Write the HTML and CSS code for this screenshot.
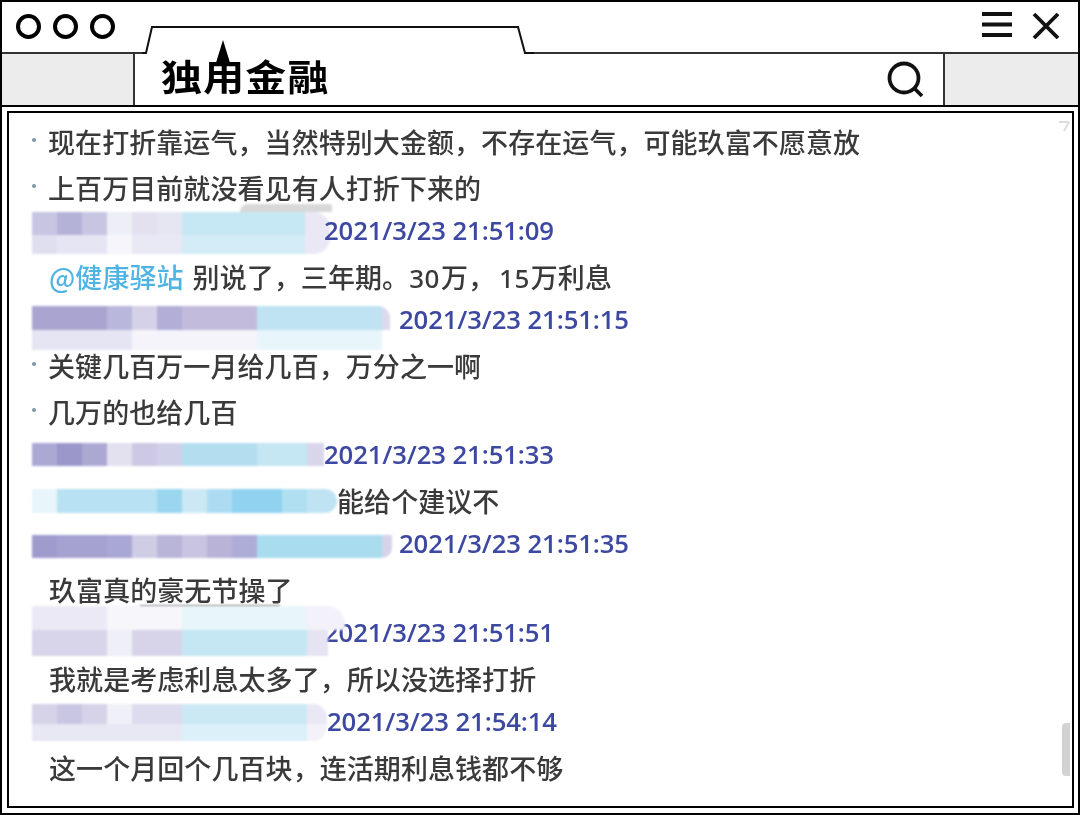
FILE: index.html
```html
<!DOCTYPE html>
<html lang="zh">
<head>
<meta charset="utf-8">
<title>独角金融</title>
<link rel="stylesheet" href="styles.css">
</head>
<body>
<div class="window">
  <svg class="tab" width="392" height="30" viewBox="0 0 392 30"><path d="M0 28 H4 L10 2 H376 L383 28 H392 V30 H0 Z" fill="#fff" stroke="none"/><path d="M0 28 H4 L10 2 H376 L383 28 H392" fill="none" stroke="#111" stroke-width="2"/></svg>
  <header class="titlebar">
    <div class="lights"><span class="light"></span><span class="light"></span><span class="light"></span></div>
    <div class="controls">
      <svg class="icon" width="32" height="28" viewBox="0 0 32 28"><path d="M1 3H31M1 13.500H31M1 24H31" stroke="#111" stroke-width="4" fill="none"/></svg>
      <svg class="icon" width="28" height="28" viewBox="0 0 28 28"><path d="M2 3L26 27M26 3L2 27" stroke="#111" stroke-width="3.800" fill="none"/></svg>
    </div>
  </header>
  <div class="addressbar">
    <div class="side side-left"></div>
    <div class="address">
      <svg class="horn" width="18" height="26" viewBox="0 0 18 26"><path d="M9 0L17 26H1Z" fill="#000"/></svg>
      <span class="brand">独用金融</span>
      <svg class="search" width="38" height="38" viewBox="0 0 38 38"><circle cx="17" cy="17" r="14.500" fill="none" stroke="#111" stroke-width="3.800"/><path d="M27 27L35 35" stroke="#111" stroke-width="3.800" fill="none"/></svg>
    </div>
    <div class="side side-right"></div>
  </div>
  <main class="frame">
    <svg class="resize" width="12" height="12" viewBox="0 0 12 12"><path d="M1 2H11M11 2L6 11" stroke="#ddd" stroke-width="2" fill="none"/></svg>
    <div class="scrollbar"></div>
    <p class="msg dot">现在打折靠运气，当然特别大金额，不存在运气，可能玖富不愿意放</p>
    <p class="msg dot">上百万目前就没看见有人打折下来的</p>
    <div class="meta"><span class="blob b1"></span><time class="stamp">2021/3/23 21:51:09</time></div>
    <p class="msg"><span class="mention">@健康驿站</span>别说了，三年期。<span class="num">30</span>万，<span class="num num-next">15</span>万利息</p>
    <div class="meta"><span class="blob b2"></span><time class="stamp">2021/3/23 21:51:15</time></div>
    <p class="msg dot">关键几百万一月给几百，万分之一啊</p>
    <p class="msg dot">几万的也给几百</p>
    <div class="meta"><span class="blob b3"></span><time class="stamp">2021/3/23 21:51:33</time></div>
    <p class="msg msg-blob"><span class="blob b4"></span><span>能给个建议不</span></p>
    <div class="meta"><span class="blob b5"></span><time class="stamp">2021/3/23 21:51:35</time></div>
    <p class="msg">玖富真的<span class="smudge">豪无节操</span>了</p>
    <div class="meta"><span class="blob b6"></span><time class="stamp">2021/3/23 21:51:51</time></div>
    <p class="msg">我就是考虑利息太多了，所以没选择打折</p>
    <div class="meta"><span class="blob b7"></span><time class="stamp">2021/3/23 21:54:14</time></div>
    <p class="msg">这一个月回个几百块，连活期利息钱都不够</p>
  </main>
</div>
</body>
</html>
```
FILE: styles.css
```css
* { box-sizing: border-box; }
html, body { margin: 0; padding: 0; background: #fff; }
body { width: 1080px; height: 815px; overflow: hidden; font-family: "Noto Sans CJK SC", "Noto Sans", sans-serif; }

.window { position: relative; width: 1080px; height: 815px; border: 2px solid #000; display: flex; flex-direction: column; background: #fff; }
.tab { position: absolute; left: 140px; top: 23px; z-index: 2; }

.titlebar { height: 50px; display: flex; justify-content: space-between; align-items: flex-start; padding: 9px 18px 0 14px; }
.lights { display: flex; gap: 12px; margin-top: 3px; }
.light { width: 25px; height: 25px; border: 4px solid #000; border-radius: 50%; }
.controls { display: flex; gap: 19px; }
.icon { display: block; }

.addressbar { height: 55px; display: flex; border-top: 2px solid #333; border-bottom: 2px solid #000; }
.side { background: #ececec; }
.side-left { width: 133px; border-right: 2px solid #333; }
.side-right { width: 135px; border-left: 2px solid #333; }
.address { position: relative; flex: 1; display: flex; align-items: center; justify-content: space-between; padding: 0 18px 0 26px; background: #fff; }
.brand { position: relative; z-index: 3; margin-bottom: 10px; font-size: 36px; line-height: 44px; font-weight: 700; letter-spacing: 1px; color: #000; transform: scaleX(1.14); transform-origin: left center; }
.horn { position: absolute; left: 79px; top: -14px; z-index: 3; }
.search { display: block; }

.frame { position: relative; margin: 4px 4px 5px 5px; flex: 1; border: 2px solid #000; padding: 5.500px 0 0; min-height: 0; background: #fff; }
.resize { position: absolute; right: 2px; top: 7px; }
.scrollbar { position: absolute; right: 2px; top: 610px; width: 8px; height: 53px; background: #d2d2d2; border-radius: 4px 0 0 4px; filter: blur(0.6px); }

.msg { margin: 0; height: 46px; padding-left: 40px; font-size: 27px; font-weight: 500; letter-spacing: 0.07px; line-height: 46px; color: #3a3a3a; white-space: nowrap; filter: blur(0.6px); }
.dot::before { content: ""; display: inline-block; width: 4px; height: 4px; margin: 0 12px 10px -17px; background: #7d98a3; border-radius: 50%; vertical-align: middle; }
.mention { margin-right: 9px; color: #4fb4e4; }
.num { font-family: "Noto Sans", sans-serif; font-size: 26px; font-weight: 500; letter-spacing: 0.5px; margin-right: 1px; }
.num-next { margin-left: 4px; }
.smudge { position: relative; }
.smudge::after { content: ""; position: absolute; left: -17px; bottom: 1px; width: 140px; height: 3px; background: #9a9a9a; filter: blur(0.8px); }

.msg-blob { display: flex; padding-left: 23px; }
.meta { height: 40px; margin-bottom: 3px; padding-left: 23px; display: flex; align-items: flex-start; }
.stamp { font-family: "Open Sans", "Noto Sans", sans-serif; font-size: 25.700px; font-weight: 600; letter-spacing: -0.1px; line-height: 40px; color: #3c48a2; white-space: nowrap; filter: blur(0.5px); }

.blob { display: block; flex: none; position: relative; filter: blur(1px); background-repeat: no-repeat; }
.b1 { width: 298px; height: 42px; margin: 1px -6px 0 0; border-radius: 0 16px 16px 0;
  background-image:
    linear-gradient(90deg, #c8c5e2 0 25px, #b5b2d8 25px 50px, #c8c5e2 50px 75px, #eeeef7 75px 100px, #e3e1f0 100px 125px, #e6e6f3 125px 150px, #c6e7f4 150px 273px, #ebe8f5 273px),
    linear-gradient(90deg, #e0dff0 0 25px, #e6e5f3 25px 75px, #f5f5fb 75px 100px, #e9e8f5 100px 150px, #d3ecf7 150px 273px, #ebe8f5 273px);
  background-size: 100% 23px, 100% 19px; background-position: top, bottom; }
.b1::before { content: ""; position: absolute; left: 208px; top: -8px; width: 92px; height: 8px; background: #d8d8d8; border-radius: 30px 6px 0 0; }
.b2 { width: 358px; height: 44px; margin: 6px 9px 0 0; border-radius: 0 12px 0 0;
  background-image:
    linear-gradient(90deg, #a9a5d0 0 75px, #b9b8dc 75px 100px, #d5d2e8 100px 125px, #b2aed8 125px 150px, #c2bbdc 150px 225px, #bfe3f2 225px 350px, #dcd9ee 350px),
    linear-gradient(90deg, #e5e5f3 0 100px, #f4f4fa 100px 225px, #e8f5fb 225px 350px, #fff 350px);
  background-size: 100% 24px, 100% 20px; background-position: top, bottom; }
.b3 { width: 292px; height: 23px; margin: 8px 0 0 0;
  background-image: linear-gradient(90deg, #aba8d4 0 25px, #9b97cb 25px 50px, #aba9d2 50px 75px, #e3e1f0 75px 100px, #cdc8e4 100px 125px, #d0d0e8 125px 150px, #b2def0 150px 225px, #c5e6f3 225px 275px, #d9d6ec 275px); }
.b4 { width: 305px; height: 24px; margin: 11px 0 0 0; border-radius: 0 12px 12px 0;
  background-image: linear-gradient(90deg, #e8f5fb 0 25px, #b8e2f3 25px 125px, #9bd6ef 125px 150px, #cde8f5 150px 175px, #addcf2 175px 200px, #90d2ef 200px 250px, #b0dff2 250px 275px, #bfe3f2 275px); }
.b5 { width: 360px; height: 23px; margin: 11px 7px 0 0; border-radius: 0 0 10px 0;
  background-image: linear-gradient(90deg, #9f9ccd 0 25px, #a5a2d0 25px 75px, #a9a7d4 75px 100px, #cfcce6 100px 125px, #b9b5d9 125px 150px, #c9c4e1 150px 175px, #bab3d8 175px 200px, #adadd7 200px 225px, #aadcf0 225px 350px, #d6d2ea 350px); }
.b6 { width: 313px; height: 50px; margin: -7px -21px 0 0; z-index: 1; border-radius: 0 18px 0 0;
  background-image:
    linear-gradient(90deg, #ebe9f5 0 75px, #f6f6fb 75px 150px, #e8f5fb 150px 275px, #f3f1f9 275px),
    linear-gradient(90deg, #d8d5ea 0 75px, #efeff7 75px 100px, #d7d4ea 100px 150px, #c5e6f3 150px 275px, #e6e3f2 275px 296px, transparent 296px);
  background-size: 100% 24px, 100% 26px; background-position: top, bottom; }
.b7 { width: 295px; height: 37px; margin: 2px 0 0 0; border-radius: 0 14px 14px 0;
  background-image:
    linear-gradient(90deg, #d6d3e9 0 25px, #c9c6e3 25px 50px, #d6d3e9 50px 75px, #f0f0f8 75px 100px, #dddbee 100px 150px, #cbe9f5 150px 275px, #ebe8f5 275px),
    linear-gradient(90deg, #e8e7f4 0 150px, #dbf0f8 150px 275px, #f3f1f9 275px);
  background-size: 100% 20px, 100% 17px; background-position: top, bottom; }
```
